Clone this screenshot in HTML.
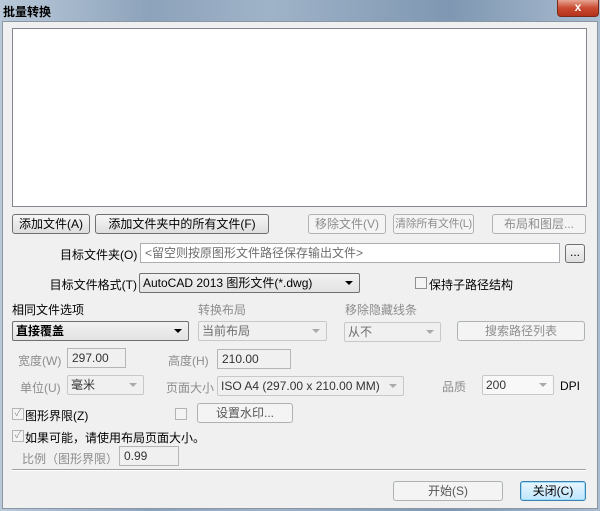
<!DOCTYPE html>
<html><head><meta charset="utf-8"><style>
*{margin:0;padding:0;box-sizing:border-box}
body{width:600px;height:511px;overflow:hidden;position:relative;font-family:"Liberation Sans","Noto Sans CJK SC",sans-serif;font-size:12px;color:#000;background:linear-gradient(90deg,#b9c9d9 0%,#8da3bb 25%,#9fb3c8 45%,#7f97b2 75%,#a9bcd0 100%)}
.a{position:absolute;white-space:nowrap}
.body{position:absolute;left:2px;top:21px;width:596px;height:488px;background:#f0f0f0;border:1px solid #8a96a3}
.btn{position:absolute;height:20px;border:1px solid #707070;border-radius:3px;background:linear-gradient(#f6f6f6,#dedede);text-align:center;line-height:18px;white-space:nowrap;overflow:hidden}
.dis{border-color:#adb2b5;background:#f4f4f4;color:#8d8d8d}
.in{position:absolute;height:20px;border:1px solid #abadb3;background:#fff;padding-left:4px;line-height:18px;white-space:nowrap}
.ind{background:#f0f0f0;border-color:#b5b5b5}
.sel{position:absolute;height:20px;border:1px solid #707070;background:linear-gradient(#f2f2f2,#e2e2e2);padding-left:3px;line-height:18px;border-radius:2px;white-space:nowrap}
.sel:after{content:"";position:absolute;right:6px;top:7px;border:4px solid transparent;border-top:4px solid #000}
.seld{border-color:#c8c8c8;background:#f0f0f0;color:#6d6d6d}
.seld:after{border-top-color:#aaa}
.g{color:#8d8d8d}
.cb{position:absolute;width:12px;height:12px;border:1px solid #8e8f8f;background:#f4f4f4}
.cbd{border-color:#b4b4b4;color:#9a9a9a;font-size:10px;line-height:10px;text-align:center}
</style></head><body>
<div class="a" style="left:3px;top:3px;font-weight:bold;font-size:12px">批量转换</div>
<div class="a" style="left:557px;top:0;width:42px;height:17px;background:linear-gradient(#e8a593,#c94a30 50%,#b3321d);border:1px solid #7a2a1c;border-top:none;border-radius:0 0 4px 4px;color:#fff;text-align:center;font-weight:bold;font-size:12px;line-height:15px">x</div>
<div class="body"></div>
<div class="a" style="left:12px;top:28px;width:575px;height:179px;background:#fff;border:1px solid #828790"></div>

<div class="btn" style="left:12px;top:214px;width:78px">添加文件(A)</div>
<div class="btn" style="left:95px;top:214px;width:174px">添加文件夹中的所有文件(F)</div>
<div class="btn dis" style="left:308px;top:214px;width:78px">移除文件(V)</div>
<div class="btn dis" style="left:393px;top:214px;width:81px;font-size:11px;letter-spacing:-0.3px">清除所有文件(L)</div>
<div class="btn dis" style="left:492px;top:214px;width:94px">布局和图层...</div>

<div class="a" style="left:60px;top:246px;width:77px;text-align:right">目标文件夹(O)</div>
<div class="in" style="left:140px;top:243px;width:420px;color:#6d6d6d">&lt;留空则按原图形文件路径保存输出文件&gt;</div>
<div class="btn" style="left:565px;top:244px;width:20px;height:19px;line-height:14px">...</div>

<div class="a" style="left:40px;top:276px;width:97px;text-align:right">目标文件格式(T)</div>
<div class="sel" style="left:139px;top:273px;width:221px">AutoCAD 2013 图形文件(*.dwg)</div>
<div class="cb" style="left:415px;top:277px"></div>
<div class="a" style="left:429px;top:276px">保持子路径结构</div>

<div class="a" style="left:12px;top:301px">相同文件选项</div>
<div class="a g" style="left:198px;top:301px">转换布局</div>
<div class="a g" style="left:345px;top:301px">移除隐藏线条</div>
<div class="sel" style="left:12px;top:321px;width:177px;font-weight:bold">直接覆盖</div>
<div class="sel seld" style="left:198px;top:321px;width:129px">当前布局</div>
<div class="sel seld" style="left:344px;top:322px;width:97px">从不</div>
<div class="btn dis" style="left:457px;top:321px;width:128px">搜索路径列表</div>

<div class="a g" style="left:18px;top:352px">宽度(W)</div>
<div class="in ind" style="left:67px;top:348px;width:59px;color:#333">297.00</div>
<div class="a g" style="left:168px;top:352px">高度(H)</div>
<div class="in ind" style="left:217px;top:349px;width:74px;color:#333">210.00</div>

<div class="a g" style="left:20px;top:379px">单位(U)</div>
<div class="sel seld" style="left:67px;top:375px;width:77px;color:#333">毫米</div>
<div class="a g" style="left:166px;top:379px">页面大小</div>
<div class="sel seld" style="left:217px;top:376px;width:187px;color:#333">ISO A4 (297.00 x 210.00 MM)</div>
<div class="a g" style="left:442px;top:378px">品质</div>
<div class="sel seld" style="left:482px;top:375px;width:72px;color:#333;background:#f8f8f8">200</div>
<div class="a" style="left:560px;top:379px">DPI</div>

<div class="cb cbd" style="left:12px;top:408px">✓</div>
<div class="a" style="left:25px;top:407px">图形界限(Z)</div>
<div class="cb" style="left:175px;top:408px;border-color:#b4b4b4"></div>
<div class="btn dis" style="left:197px;top:403px;width:96px;color:#555">设置水印...</div>

<div class="cb cbd" style="left:12px;top:430px">✓</div>
<div class="a" style="left:25px;top:429px">如果可能，请使用布局页面大小。</div>
<div class="a g" style="left:22px;top:450px">比例（图形界限）</div>
<div class="in ind" style="left:119px;top:446px;width:60px;color:#333">0.99</div>

<div class="a" style="left:12px;top:469px;width:574px;height:2px;border-top:1px solid #a0a0a0;border-bottom:1px solid #fff"></div>
<div class="btn dis" style="left:393px;top:481px;width:110px;color:#555">开始(S)</div>
<div class="btn" style="left:520px;top:481px;width:66px;border-color:#3c7fb1;box-shadow:inset 0 0 0 1px #9be0f8;background:linear-gradient(#eaf6fd,#bee6fd)">关闭(C)</div>
</body></html>
